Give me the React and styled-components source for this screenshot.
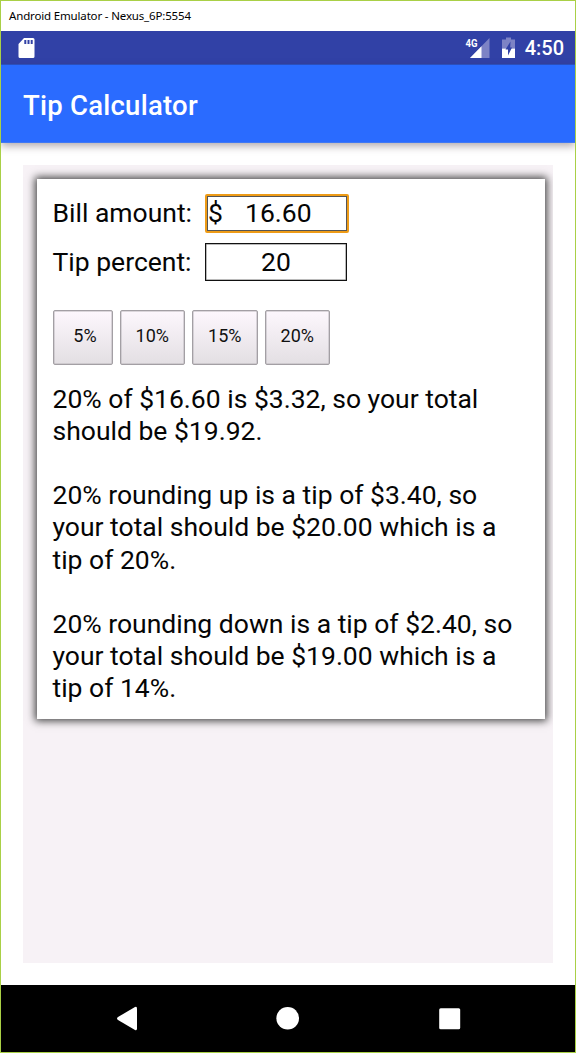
import React from "react";
import styled, { createGlobalStyle } from "styled-components";

const GlobalStyle = createGlobalStyle`
  * { box-sizing: border-box; }
  body { margin: 0; background: #fff; font-family: Roboto, sans-serif; }
`;

const Emulator = styled.div`
  display: flex;
  flex-direction: column;
  width: 576px;
  height: 1053px;
  border: 1px solid #a9d046;
  background: #fff;
  overflow: hidden;
`;

const WindowTitle = styled.div`
  flex: 0 0 30px;
  padding-left: 8px;
  font: 11.5px/29px "Noto Sans", sans-serif;
  letter-spacing: -0.16px;
  color: #000;
  white-space: nowrap;
`;

const StatusBar = styled.div`
  flex: 0 0 34px;
  display: flex;
  align-items: center;
  padding: 0 11px 0 17px;
  background: #3141a6;
  border-bottom: 1px solid #2b53c8;
  color: #fff;
`;

const Spacer = styled.div`
  flex: 1;
`;

const Clock = styled.div`
  margin-left: 10px;
  padding-top: 2px;
  font-size: 20px;
  font-weight: 500;
  line-height: 31px;
`;

const AppBar = styled.header`
  flex: 0 0 78px;
  display: flex;
  align-items: center;
  padding: 3px 0 0 22px;
  background: #2a6bff;
  border-bottom: 1px solid #4079f4;
  box-shadow: 0 3px 8px rgba(60, 40, 50, 0.4);
  color: #fff;
  font-size: 27.5px;
  font-weight: 500;
  letter-spacing: 0.24px;
`;

const Content = styled.main`
  flex: 1;
  padding: 22px;
`;

const Panel = styled.div`
  width: 530px;
  height: 798px;
  padding: 14px;
  background: #f7f2f6;
  overflow: hidden;
`;

const Card = styled.section`
  width: 508px;
  height: 540px;
  padding: 15px 15.500px;
  background: #fff;
  box-shadow: 0 0 8px 2px #444;
  color: #050505;
  font-size: 26.5px;
`;

const Field = styled.label`
  display: flex;
  align-items: center;
  height: ${(p) => p.$height}px;
  margin-bottom: ${(p) => p.$gap}px;
  white-space: nowrap;
`;

const Label = styled.span`
  width: 152.500px;
  padding-bottom: ${(p) => p.$lift}px;
`;

const Value = styled.span`
  display: flex;
  justify-content: center;
  align-items: center;
  width: 142px;
  height: 38px;
  padding-bottom: 1px;
  border: 1px solid #111;
  box-shadow: inset 0 0 0 0.5px #777;
`;

const FocusedValue = styled(Value)`
  width: 144px;
  height: 39px;
  padding-bottom: 3px;
  border: 2px solid #ee9b16;
  border-radius: 2px;
  box-shadow: inset 0 0 0 1px #555;
`;

const Currency = styled.span`
  width: 37px;
`;

const Amount = styled.span`
  width: 101px;
`;

const ButtonRow = styled.div`
  display: flex;
  gap: 7px;
  margin-bottom: 18px;
`;

const PresetButton = styled.button`
  width: ${(p) => p.$width}px;
  height: 55px;
  padding: 0 0 4px ${(p) => p.$inset || 0}px;
  border: 1px solid #a39fa4;
  border-radius: 2px;
  background: linear-gradient(#fdf7fd, #e3dfe3);
  box-shadow: inset 0 0 0 0.5px #b9b5ba;
  color: #111;
  font: 18px Roboto, sans-serif;
`;

const Result = styled.p`
  margin: 0 0 32px;
  line-height: 32.15px;
  white-space: nowrap;
`;

const NavBar = styled.nav`
  flex: 0 0 67px;
  display: flex;
  justify-content: center;
  background: #000;
`;

const Battery = styled.svg`
  margin-left: 12px;
`;

const results = [
  ["20% of $16.60 is $3.32, so your total", "should be $19.92."],
  ["20% rounding up is a tip of $3.40, so", "your total should be $20.00 which is a", "tip of 20%."],
  ["20% rounding down is a tip of $2.40, so", "your total should be $19.00 which is a", "tip of 14%."],
];

const SdCardIcon = () => (
  <svg width="17" height="22" viewBox="0 0 17 22">
    <path fill="#fff" fillRule="evenodd" d="M6 1H15Q16.500 1 16.500 2.500V19.500Q16.500 21 15 21H2Q.5 21 .5 19.500V7ZM6.300 3V7H8.300V3ZM9.500 3V7H11.500V3ZM12.700 3V7H14.700V3Z" />
  </svg>
);

const SignalIcon = () => (
  <svg width="26" height="22" viewBox="0 0 26 22">
    <path fill="#7d83c5" d="M25.500 1V21H6Z" />
    <path fill="#fff" d="M17.500 9.200V21H6Z" />
    <text x="1.500" y="10" fill="#fff" fontFamily="Roboto" fontWeight="700" fontSize="10.500" textLength="12" lengthAdjust="spacingAndGlyphs">4G</text>
  </svg>
);

const BatteryIcon = () => (
  <Battery width="13" height="22" viewBox="0 0 13 22">
    <path fill="#7d83c5" d="M4 .5H9V2.500H13V11.500H0V2.500H4Z" />
    <path fill="#fff" d="M0 11.500H13V21H0Z" />
    <path fill="#3141a6" d="M8.500 4.500 3.500 12.500H6V18.500L10 10.500H8.200Z" />
  </Battery>
);

export default function App() {
  return (
    <>
      <GlobalStyle />
      <Emulator>
        <WindowTitle>Android Emulator - Nexus_6P:5554</WindowTitle>
        <StatusBar>
          <SdCardIcon />
          <Spacer />
          <SignalIcon />
          <BatteryIcon />
          <Clock>4:50</Clock>
        </StatusBar>
        <AppBar>Tip Calculator</AppBar>
        <Content>
          <Panel>
            <Card>
              <Field $height={39} $gap={10}>
                <Label $lift={3}>Bill amount:</Label>
                <FocusedValue>
                  <Currency>$</Currency>
                  <Amount>16.60</Amount>
                </FocusedValue>
              </Field>
              <Field $height={38} $gap={29}>
                <Label $lift={1}>Tip percent:</Label>
                <Value>20</Value>
              </Field>
              <ButtonRow>
                <PresetButton $width={60} $inset={5}>5%</PresetButton>
                <PresetButton $width={65.5}>10%</PresetButton>
                <PresetButton $width={65.5}>15%</PresetButton>
                <PresetButton $width={65.5}>20%</PresetButton>
              </ButtonRow>
              {results.map((lines) => (
                <Result key={lines[0]}>
                  {lines.map((line) => (
                    <React.Fragment key={line}>
                      {line}
                      <br />
                    </React.Fragment>
                  ))}
                </Result>
              ))}
            </Card>
          </Panel>
        </Content>
        <NavBar>
          <svg width="574" height="67" viewBox="1 985 574 67" fill="#fff">
            <path d="M135 1007Q137 1006 137 1008.500V1028.500Q137 1031 135 1030L118 1020Q116 1018.500 118 1017Z" />
            <circle cx="287.700" cy="1018.300" r="11.300" />
            <rect x="439.200" y="1008.200" width="21" height="21" rx="1.500" />
          </svg>
        </NavBar>
      </Emulator>
    </>
  );
}
